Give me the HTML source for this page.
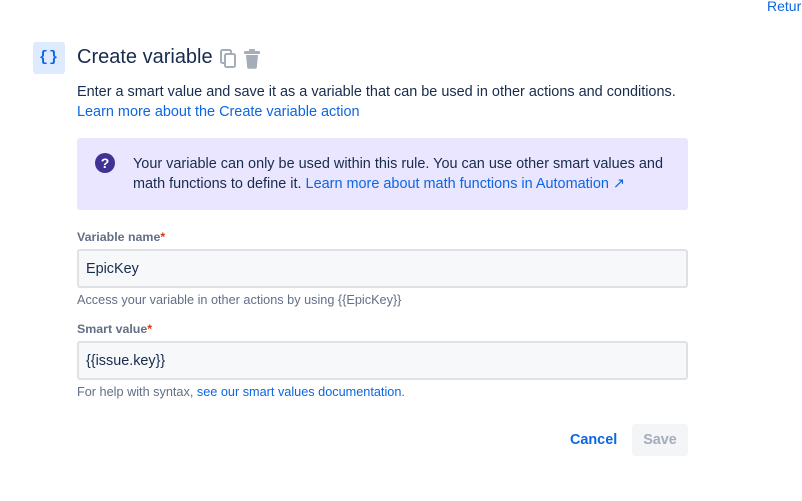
<!DOCTYPE html>
<html><head><style>
body{margin:0;width:802px;height:501px;background:#fff;font-family:"Liberation Sans",sans-serif;color:#172B4D;position:relative;overflow:hidden}
.a{position:absolute;white-space:nowrap}
.link{color:#0C66E4}
.box{position:absolute;left:77px;width:611px;background:#F7F8F9;border:2px solid #DFE1E6;border-radius:3px;box-sizing:border-box;height:39px;font-size:14.4px;padding:10px 0 0 7px}
.lbl{font-size:12.4px;font-weight:bold;color:#626F86}
.lbl span{color:#DE350B}
.help{font-size:12.7px;color:#626F86}
</style></head><body>
<div class="a link" style="left:767px;top:-2px;font-size:14px">Return</div>
<div class="a" style="left:33px;top:42px;width:32px;height:32px;background:#DEEBFF;border-radius:3px;color:#0C66E4;font-weight:bold;font-family:'Liberation Mono',monospace;font-size:15px;text-align:center;line-height:31px;letter-spacing:1px">{}</div>
<div class="a" style="left:77px;top:46px;font-size:20px">Create variable</div>
<svg class="a" style="left:220px;top:49px" width="18" height="20" viewBox="0 0 18 20"><rect x="1" y="1" width="10" height="13" rx="1.5" fill="none" stroke="#A5ADBA" stroke-width="2"/><rect x="5" y="5" width="10" height="13" rx="1.5" fill="#fff" stroke="#A5ADBA" stroke-width="2"/></svg>
<svg class="a" style="left:243px;top:49px" width="18" height="20" viewBox="0 0 18 20"><rect x="1" y="2" width="16" height="3" rx="1" fill="#A5ADBA"/><rect x="6" y="0" width="6" height="3" rx="1" fill="#A5ADBA"/><path d="M3 6h12l-1.2 12.5a1.5 1.5 0 0 1-1.5 1.3H5.7a1.5 1.5 0 0 1-1.5-1.3z" fill="#A5ADBA"/></svg>
<div class="a" style="left:77px;top:84px;font-size:14.45px">Enter a smart value and save it as a variable that can be used in other actions and conditions.</div>
<div class="a link" style="left:77px;top:104px;font-size:14.45px">Learn more about the Create variable action</div>
<div class="a" style="left:77px;top:138px;width:611px;height:72px;background:#EAE6FF;border-radius:3px"></div>
<div class="a" style="left:95px;top:153px;width:20px;height:20px;border-radius:50%;background:#403294;color:#fff;font-weight:bold;font-size:14px;text-align:center;line-height:20px">?</div>
<div class="a" style="left:133px;top:154px;font-size:14.45px;line-height:20px">Your variable can only be used within this rule. You can use other smart values and<br>math functions to define it. <span class="link">Learn more about math functions in Automation ↗</span></div>
<div class="a lbl" style="left:77px;top:230px">Variable name<span>*</span></div>
<div class="box" style="top:249px">EpicKey</div>
<div class="a help" style="left:77px;top:293px">Access your variable in other actions by using {{EpicKey}}</div>
<div class="a lbl" style="left:77px;top:322px">Smart value<span>*</span></div>
<div class="box" style="top:341px">{{issue.key}}</div>
<div class="a help" style="left:77px;top:385px">For help with syntax, <span class="link">see our smart values documentation</span>.</div>
<div class="a link" style="left:570px;top:432px;font-size:14.4px;font-weight:bold">Cancel</div>
<div class="a" style="left:632px;top:424px;width:56px;height:32px;background:#F4F5F7;border-radius:3px;color:#A5ADBA;font-size:14.4px;font-weight:bold;text-align:center;line-height:32px">Save</div>
</body></html>
